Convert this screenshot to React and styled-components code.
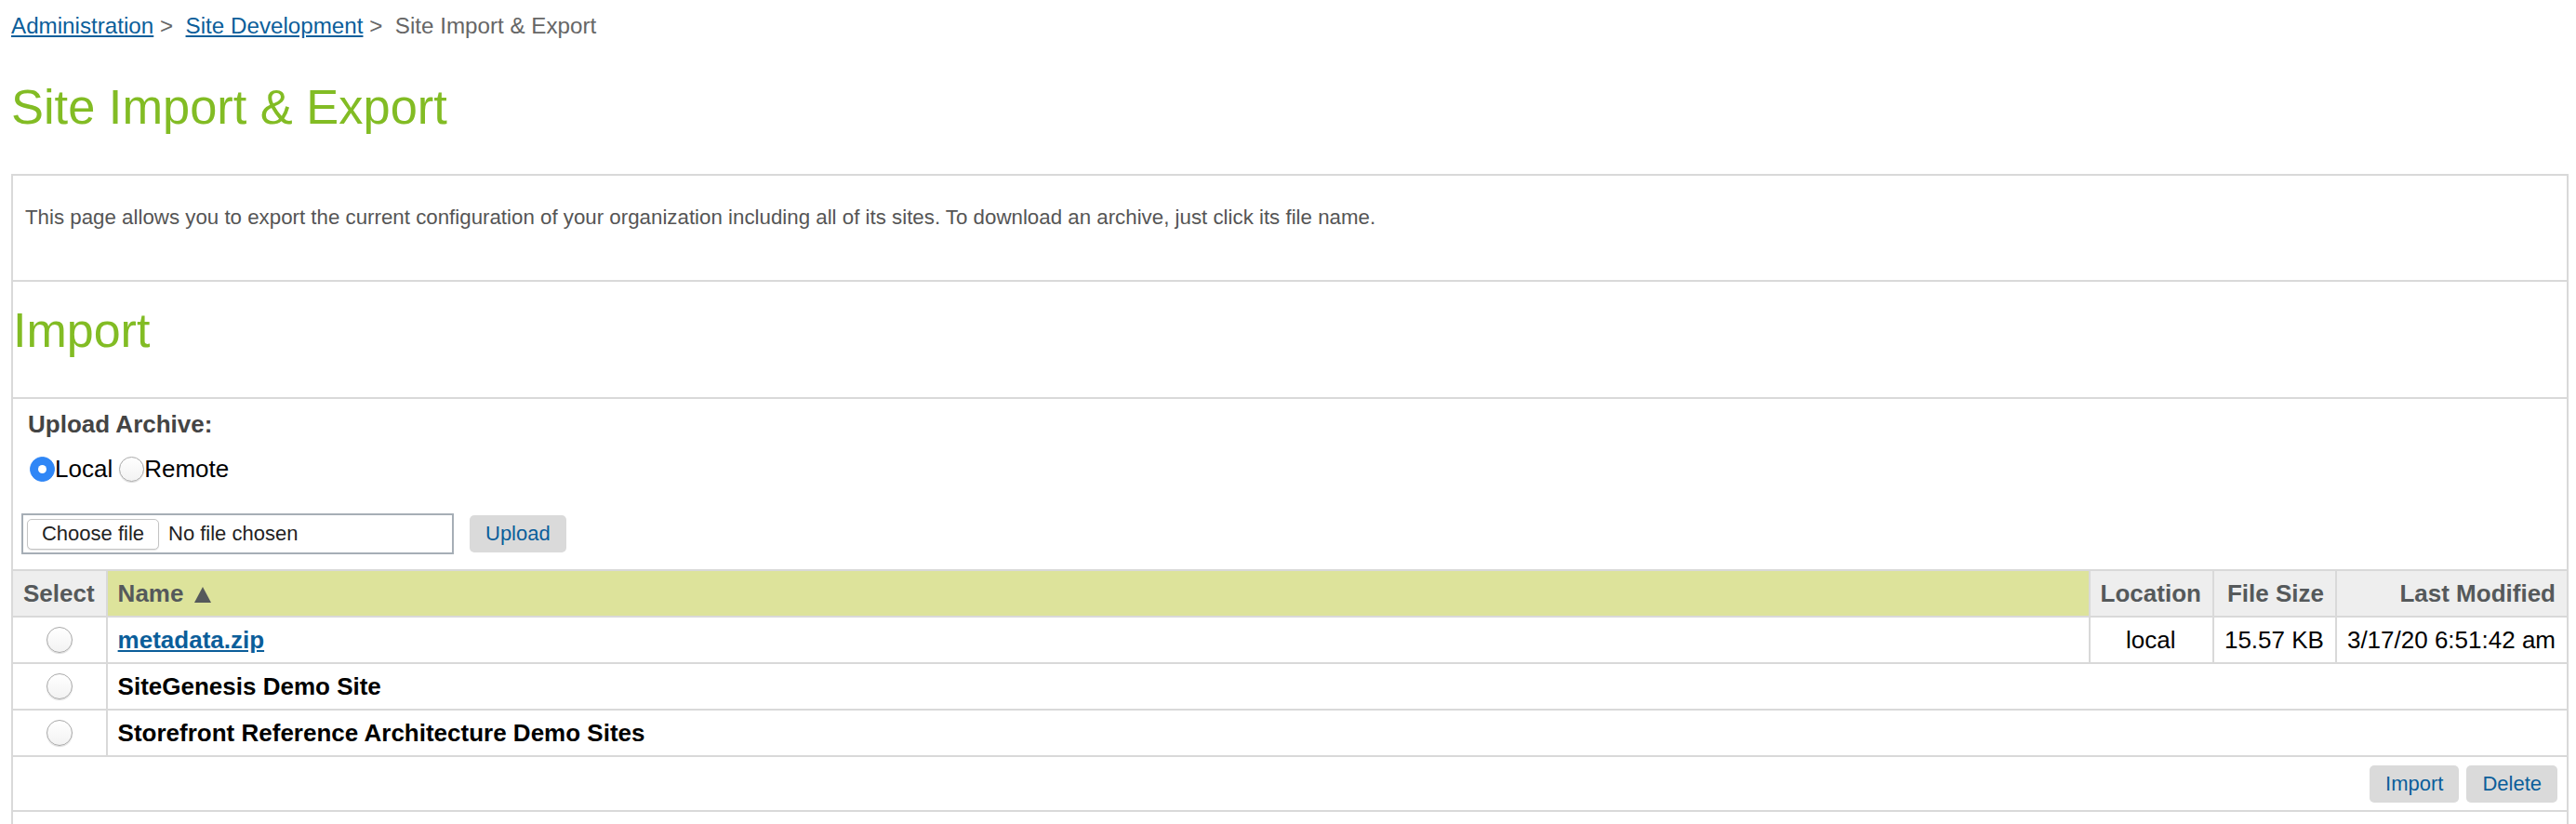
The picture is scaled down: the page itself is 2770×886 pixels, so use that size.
import React from "react";
import styled, { createGlobalStyle } from "styled-components";

const GlobalStyle = createGlobalStyle`
  html, body {
    margin: 0;
    padding: 0;
    background: #fff;
    overflow: hidden;
  }
  body {
    font-family: "Liberation Sans", Arial, Helvetica, sans-serif;
    color: #000;
  }
`;

const LINE = "#d9d9d9";
const GREEN = "#82bc24";
const LINK = "#0b5e9a";

const Page = styled.div`
  box-sizing: border-box;
  height: 886px;
  padding: 14px 8px 0 12px;
  display: flex;
  flex-direction: column;
`;

const Breadcrumb = styled.nav`
  font-size: 24.2px;
  line-height: 28px;
  color: #666;
  white-space: pre;
`;

const Crumb = styled.a`
  color: ${LINK};
  text-decoration: underline;
  cursor: pointer;
`;

const Title = styled.h1`
  margin: 43px 0 42px;
  font-size: 52.4px;
  line-height: 60px;
  font-weight: normal;
  color: ${GREEN};
`;

const Panel = styled.div`
  flex: 1;
  border: 2px solid ${LINE};
  border-bottom: none;
`;

const Intro = styled.p`
  margin: 0;
  padding: 32px 13px 54px;
  font-size: 22.3px;
  line-height: 26px;
  color: #555;
  border-bottom: 2px solid ${LINE};
`;

const SectionTitle = styled.h2`
  margin: 0;
  padding: 22px 0 42px;
  font-size: 52px;
  line-height: 60px;
  font-weight: normal;
  color: ${GREEN};
  border-bottom: 2px solid ${LINE};
`;

const UploadForm = styled.form`
  padding: 12px 0 16px 9px;
  display: flex;
  flex-direction: column;
  align-items: flex-start;
`;

const FieldLabel = styled.div`
  padding-left: 7px;
  font-size: 26px;
  line-height: 30px;
  font-weight: bold;
  color: #444;
`;

const RadioGroup = styled.div`
  margin: 18px 0 0 9px;
  display: flex;
  align-items: center;
  font-size: 26px;
  line-height: 30px;
`;

const RadioOption = styled.label`
  display: flex;
  align-items: center;
  margin-right: 7px;
`;

const Radio = styled.span`
  box-sizing: border-box;
  width: ${(p) => p.$size}px;
  height: ${(p) => p.$size}px;
  border-radius: 50%;
  flex: none;
  display: inline-flex;
  align-items: center;
  justify-content: center;
  background: ${(p) => (p.$checked ? "#2f86f6" : "linear-gradient(#ffffff, #f2f2f2)")};
  border: ${(p) => (p.$checked ? "1px solid #2f86f6" : "1.5px solid #a9a9a9")};
  box-shadow: ${(p) => (p.$checked ? "none" : "0 1px 1px rgba(0,0,0,0.15)")};

  &::after {
    content: "";
    display: ${(p) => (p.$checked ? "block" : "none")};
    width: 9px;
    height: 9px;
    border-radius: 50%;
    background: #fff;
  }
`;

const FileRow = styled.div`
  margin-top: 33px;
  display: flex;
  align-items: center;
  gap: 17px;
`;

const FileBox = styled.div`
  box-sizing: border-box;
  width: 465px;
  height: 44px;
  padding-left: 4px;
  border: 2px solid #a6aeb6;
  display: flex;
  align-items: center;
  font-size: 22px;
  color: #222;
`;

const ChooseButton = styled.span`
  box-sizing: border-box;
  width: 142px;
  height: 33px;
  border: 1px solid #c4c4c4;
  border-radius: 5px;
  background: #fff;
  box-shadow: 0 1px 1px rgba(0, 0, 0, 0.1);
  display: flex;
  align-items: center;
  justify-content: center;
`;

const FileName = styled.span`
  margin-left: 10px;
`;

const GreyButton = styled.button`
  box-sizing: border-box;
  height: 40px;
  padding: 0 17px;
  border: none;
  border-radius: 5px;
  background: #dadada;
  color: ${LINK};
  font-family: inherit;
  font-size: 22px;
  cursor: pointer;
`;

const Table = styled.table`
  width: 100%;
  border-collapse: separate;
  border-spacing: 0;
  font-size: 26px;
`;

const HeadCell = styled.th`
  box-sizing: border-box;
  height: 50px;
  padding: 0 12px 0 11px;
  border-top: 2px solid ${LINE};
  border-left: 2px solid ${LINE};
  background: ${(p) => (p.$sorted ? "#dde39b" : "#eeeeee")};
  color: #55595b;
  font-weight: bold;
  text-align: ${(p) => p.$align || "right"};
  white-space: nowrap;
  width: ${(p) => (p.$grow ? "100%" : "auto")};

  &:first-child {
    border-left: none;
    text-align: center;
  }
`;

const SortArrow = styled.svg`
  margin-left: 12px;
  vertical-align: -1px;
`;

const Cell = styled.td`
  box-sizing: border-box;
  height: 50px;
  padding: 0 12px 0 11px;
  border-top: 2px solid ${LINE};
  border-left: 2px solid ${LINE};
  text-align: ${(p) => p.$align || "center"};
  white-space: nowrap;
  font-weight: ${(p) => (p.$bold ? "bold" : "normal")};

  &:first-child {
    border-left: none;
  }
`;

const RadioCell = styled(Cell)`
  padding: 0;
  & > span {
    margin: 0 auto;
    display: flex;
  }
`;

const FileLink = styled.a`
  color: ${LINK};
  text-decoration: underline;
  cursor: pointer;
`;

const ActionCell = styled.td`
  box-sizing: border-box;
  height: 61px;
  padding: 0 10px 0 0;
  border-top: 2px solid ${LINE};
  border-bottom: 2px solid ${LINE};
`;

const Actions = styled.div`
  display: flex;
  justify-content: flex-end;
  gap: 8px;
`;

const archives = [
  { name: "metadata.zip", link: true, location: "local", size: "15.57 KB", modified: "3/17/20 6:51:42 am" },
  { name: "SiteGenesis Demo Site" },
  { name: "Storefront Reference Architecture Demo Sites" },
];

export default function App() {
  return (
    <>
      <GlobalStyle />
      <Page>
        <Breadcrumb>
          <Crumb>Administration</Crumb>{" >  "}
          <Crumb>Site Development</Crumb>{" >  "}Site Import &amp; Export
        </Breadcrumb>
        <Title>Site Import &amp; Export</Title>

        <Panel>
          <Intro>
            This page allows you to export the current configuration of your organization including all of its
            sites. To download an archive, just click its file name.
          </Intro>

          <SectionTitle>Import</SectionTitle>

          <UploadForm onSubmit={(e) => e.preventDefault()}>
            <FieldLabel>Upload Archive:</FieldLabel>
            <RadioGroup>
              <RadioOption>
                <Radio $size={27} $checked />
                Local
              </RadioOption>
              <RadioOption>
                <Radio $size={27} />
                Remote
              </RadioOption>
            </RadioGroup>
            <FileRow>
              <FileBox>
                <ChooseButton>Choose file</ChooseButton>
                <FileName>No file chosen</FileName>
              </FileBox>
              <GreyButton type="button">Upload</GreyButton>
            </FileRow>
          </UploadForm>

          <Table>
            <thead>
              <tr>
                <HeadCell>Select</HeadCell>
                <HeadCell $sorted $grow $align="left">
                  Name
                  <SortArrow width="18" height="17" viewBox="0 0 18 17">
                    <path d="M9 0 L18 17 L0 17 Z" fill="#55595b" />
                  </SortArrow>
                </HeadCell>
                <HeadCell>Location</HeadCell>
                <HeadCell>File Size</HeadCell>
                <HeadCell>Last Modified</HeadCell>
              </tr>
            </thead>
            <tbody>
              {archives.map((a) => (
                <tr key={a.name}>
                  <RadioCell>
                    <Radio $size={28} />
                  </RadioCell>
                  {a.link ? (
                    <>
                      <Cell $align="left" $bold>
                        <FileLink>{a.name}</FileLink>
                      </Cell>
                      <Cell>{a.location}</Cell>
                      <Cell>{a.size}</Cell>
                      <Cell>{a.modified}</Cell>
                    </>
                  ) : (
                    <Cell $align="left" $bold colSpan={4}>
                      {a.name}
                    </Cell>
                  )}
                </tr>
              ))}
              <tr>
                <ActionCell colSpan={5}>
                  <Actions>
                    <GreyButton type="button">Import</GreyButton>
                    <GreyButton type="button">Delete</GreyButton>
                  </Actions>
                </ActionCell>
              </tr>
            </tbody>
          </Table>
        </Panel>
      </Page>
    </>
  );
}
